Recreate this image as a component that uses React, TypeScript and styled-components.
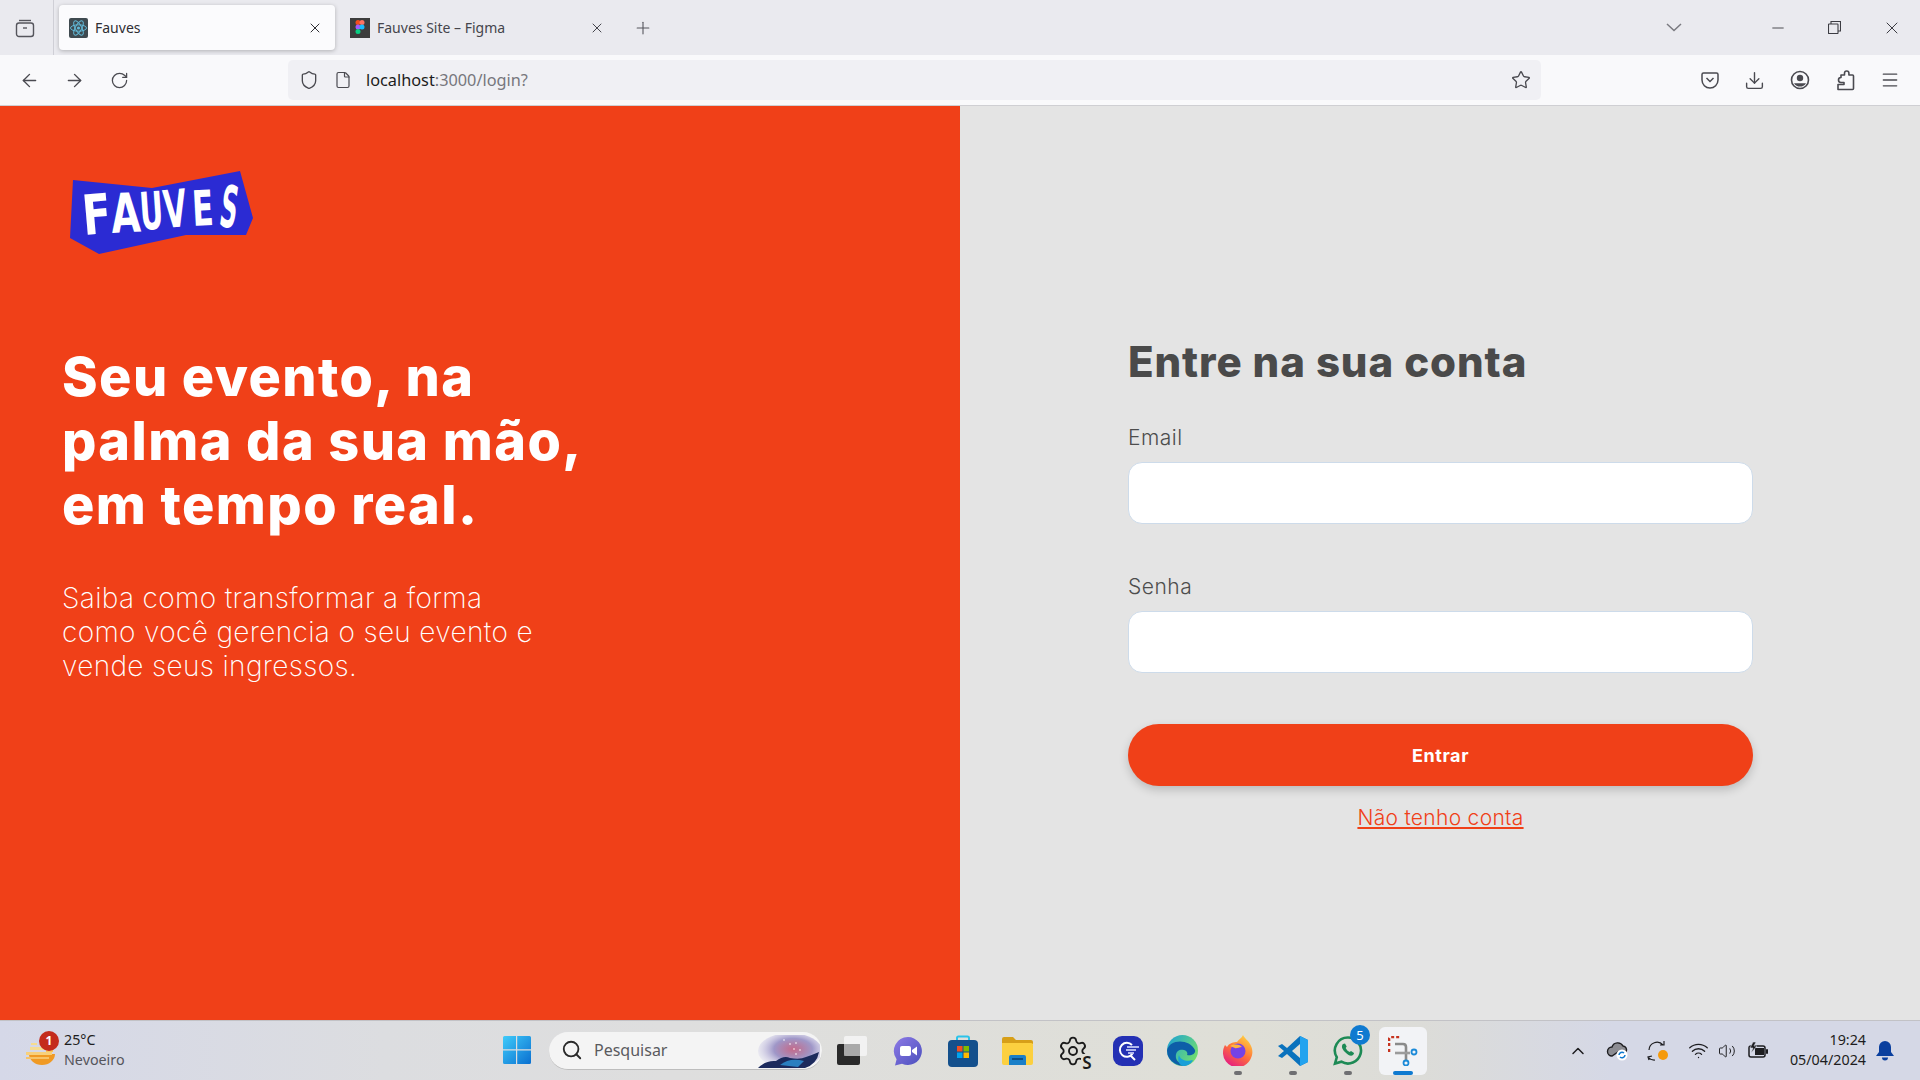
import { ArrowLeft, ArrowRight, ChevronUp, Download, File, Menu, Minus, Plus, RotateCw, Search, Settings, Shield, Star, Volume2, Wifi, X } from 'lucide-react';
import styled, { createGlobalStyle } from 'styled-components';

const GlobalStyle = createGlobalStyle`
	html, body {
		margin: 0;
		padding: 0;
		overflow: hidden;
	}
	* {
		box-sizing: border-box;
	}
`;

const ORANGE = '#f04018';
const CHROME_FONT = `'Noto Sans', 'Open Sans', sans-serif`;
const PAGE_FONT = `Inter, 'Open Sans', sans-serif`;

const Screen = styled.div`
	width: 1920px;
	height: 1080px;
	display: flex;
	flex-direction: column;
	overflow: hidden;
`;

/* ---------- browser chrome ---------- */

const TabBar = styled.div`
	height: 55px;
	flex: none;
	display: flex;
	align-items: stretch;
	background: #eaeaef;
	font-family: ${CHROME_FONT};
	color: #3a3a40;
`;

const TabsButton = styled.div`
	width: 54px;
	display: flex;
	align-items: center;
	justify-content: center;
	border-right: 1px solid #cfcfd6;
	padding-right: 4px;
`;

const Tab = styled.div<{ $active?: boolean; $width: number }>`
	width: ${(p) => p.$width}px;
	margin: 5px 0 5px 5px;
	padding: 0 12px 0 10px;
	display: flex;
	align-items: center;
	gap: 7px;
	font-size: 14px;
	border-radius: 4px;
	color: ${(p) => (p.$active ? '#2e2e33' : '#45454c')};
	background: ${(p) => (p.$active ? '#fbfbfd' : 'transparent')};
	box-shadow: ${(p) => (p.$active ? '0 1px 4px rgba(0, 0, 0, 0.25)' : 'none')};
`;

const TabTitle = styled.span`
	flex: 1;
	white-space: nowrap;
`;

const NewTab = styled.div`
	margin-left: 16px;
	display: flex;
	align-items: center;
	color: #55555c;
`;

const TabListButton = styled.div`
	margin-left: auto;
	width: 60px;
	display: flex;
	align-items: center;
	justify-content: center;
	color: #7a7a80;
	padding-bottom: 1px;
`;

const WindowButton = styled.div`
	width: 57px;
	display: flex;
	align-items: center;
	justify-content: center;
	color: #3c3c42;
`;

const WindowButtons = styled.div`
	margin-left: 45px;
	display: flex;
`;

const NavBar = styled.div`
	height: 51px;
	flex: none;
	display: flex;
	align-items: center;
	background: #f9f9fb;
	border-bottom: 1px solid #cfcfd3;
	padding-left: 7px;
	color: #4a4a50;
`;

const NavButton = styled.div`
	width: 45px;
	display: flex;
	align-items: center;
	justify-content: center;
`;

const UrlBar = styled.div`
	width: 1253px;
	height: 40px;
	margin-left: 146px;
	display: flex;
	align-items: center;
	border-radius: 5px;
	background: #f0f0f4;
	padding: 0 10px 0 11px;
	font-family: ${CHROME_FONT};
	font-size: 16.3px;
`;

const UrlIcon = styled.span`
	width: 35px;
	display: flex;
	align-items: center;
	color: #4a4a50;
`;

const UrlHost = styled.span`
	color: #1c1c20;
	margin-left: -3px;
`;

const UrlPath = styled.span`
	color: #77777d;
	flex: 1;
`;

const NavTools = styled.div`
	margin-left: 146px;
	display: flex;
`;

/* ---------- page ---------- */

const Main = styled.main`
	flex: 1;
	min-height: 0;
	display: flex;
`;

const HeroPanel = styled.section`
	width: 960px;
	background: ${ORANGE};
	padding: 59px 0 0 62px;
	color: #fff;
	font-family: ${PAGE_FONT};
`;

const LogoArt = styled.svg`
	display: block;
	width: 200px;
	height: 100px;
`;

const HeroTitle = styled.h1`
	margin: 80px 0 0;
	font-size: 54px;
	line-height: 64px;
	font-weight: 800;
	letter-spacing: 1.4px;
`;

const HeroText = styled.p`
	margin: 44px 0 0;
	width: 520px;
	font-size: 28px;
	line-height: 34px;
	font-weight: 200;
	letter-spacing: 0.35px;
`;

const FormPanel = styled.section`
	flex: 1;
	background: #e4e4e4;
	padding: 231px 0 0 168px;
	font-family: ${PAGE_FONT};
`;

const LoginForm = styled.form`
	width: 625px;
	display: flex;
	flex-direction: column;
`;

const FormTitle = styled.h2`
	margin: 0 0 38px;
	font-size: 42px;
	line-height: 50px;
	font-weight: 800;
	letter-spacing: 0.9px;
	color: #4a4a4a;
`;

const Field = styled.label`
	display: block;
	margin-bottom: 50px;
	font-size: 21px;
	line-height: 26px;
	font-weight: 300;
	letter-spacing: 0.5px;
	color: #4d4d4d;
`;

const FieldInput = styled.input`
	display: block;
	width: 100%;
	height: 62px;
	margin-top: 11px;
	border-radius: 14px;
	border: 1px solid #cddbea;
	background: #fff;
	outline: none;
`;

const SubmitButton = styled.button`
	height: 62px;
	margin-top: 1px;
	border: none;
	border-radius: 31px;
	background: ${ORANGE};
	color: #fff;
	font-family: ${PAGE_FONT};
	font-size: 18px;
	font-weight: 700;
	letter-spacing: 0.6px;
	box-shadow: 0 4px 10px rgba(0, 0, 0, 0.18);
`;

const SignupLink = styled.a`
	margin-top: 18px;
	align-self: center;
	font-size: 21px;
	line-height: 28px;
	font-weight: 300;
	letter-spacing: 0.3px;
	color: ${ORANGE};
	text-decoration: underline;
`;

/* ---------- taskbar ---------- */

const Taskbar = styled.footer`
	height: 60px;
	flex: none;
	display: grid;
	grid-template-columns: 490px auto 1fr;
	align-items: center;
	border-top: 1px solid #c2c2c6;
	background: linear-gradient(90deg, #d5d8e8 0%, #dcdde0 20%, #dedede 35%, #dfdfd7 65%, #dcdcd8 74%, #d5d8e6 84%, #d5d8e6 100%);
	font-family: ${CHROME_FONT};
	color: #1d1d20;
`;

const Weather = styled.div`
	position: relative;
	display: flex;
	align-items: center;
	padding-left: 25px;
	gap: 9px;
`;

const WeatherBadge = styled.span`
	position: absolute;
	left: 39px;
	top: -1px;
	width: 20px;
	height: 20px;
	border-radius: 50%;
	background: #c42b1c;
	color: #fff;
	font-size: 12px;
	font-weight: 700;
	display: flex;
	align-items: center;
	justify-content: center;
`;

const WeatherText = styled.div`
	display: flex;
	flex-direction: column;
	font-size: 14.3px;
	line-height: 20px;
	margin-top: -2px;
`;

const WeatherSub = styled.span`
	color: #55555c;
`;

const CenterGroup = styled.div`
	display: flex;
	align-items: center;
`;

const TaskSlot = styled.div<{ $running?: boolean; $selected?: boolean }>`
	position: relative;
	width: ${(p) => (p.$selected ? 48 : 55)}px;
	height: 48px;
	margin: 0 ${(p) => (p.$selected ? 3.5 : 0)}px;
	display: flex;
	align-items: center;
	justify-content: center;
	border-radius: 6px;
	background: ${(p) => (p.$selected ? '#f2f3f6' : 'transparent')};
	&::after {
		content: '';
		display: ${(p) => (p.$running || p.$selected ? 'block' : 'none')};
		position: absolute;
		bottom: 0;
		left: 50%;
		transform: translateX(-50%);
		width: ${(p) => (p.$selected ? 20 : 8)}px;
		height: 4px;
		border-radius: 2px;
		background: ${(p) => (p.$selected ? '#0f7ad0' : '#6f6f72')};
	}
`;

const CountBadge = styled.span`
	position: absolute;
	right: 5px;
	top: -2px;
	width: 20px;
	height: 20px;
	border-radius: 50%;
	background: #0f7ad0;
	color: #fff;
	font-size: 13px;
	display: flex;
	align-items: center;
	justify-content: center;
`;

const SearchBox = styled.div`
	position: relative;
	width: 273px;
	height: 38px;
	margin: 0 3px 0 4px;
	display: flex;
	align-items: center;
	gap: 11px;
	padding-left: 12px;
	border-radius: 19px;
	background: #f4f4f4;
	border-bottom: 1px solid #bdbdbd;
	font-size: 16px;
	color: #5a5a5e;
	overflow: hidden;
`;

const SearchArt = styled.svg`
	position: absolute;
	right: 2px;
	top: 3px;
`;

const Tray = styled.div`
	display: flex;
	align-items: center;
	justify-content: flex-end;
	padding-right: 20px;
`;

const TraySlot = styled.div<{ $w: number }>`
	width: ${(p) => p.$w}px;
	display: flex;
	align-items: center;
	justify-content: center;
`;

const Clock = styled.div`
	width: 86px;
	margin: -2px 4px 0 0;
	text-align: right;
	font-size: 14.3px;
	line-height: 20px;
`;

const SettingsWrap = styled.div`
	position: relative;
	display: flex;
`;

const SettingsLetter = styled.span`
	position: absolute;
	right: -3px;
	bottom: -4px;
	font-size: 17px;
	line-height: 17px;
	font-weight: 600;
	color: #1b1b1b;
	background: #dfdfd8;
	padding-left: 1px;
`;

/* ---------- drawings ---------- */

const ReactFavicon = () => (
	<svg width='19' height='20' viewBox='0 0 19 20'>
		<rect width='19' height='20' rx='2' fill='#3f4a50' />
		<g fill='none' stroke='#61b8d6' strokeWidth='1'>
			<ellipse cx='9.5' cy='10' rx='8' ry='3.2' />
			<ellipse cx='9.5' cy='10' rx='8' ry='3.2' transform='rotate(60 9.5 10)' />
			<ellipse cx='9.5' cy='10' rx='8' ry='3.2' transform='rotate(120 9.5 10)' />
		</g>
		<circle cx='9.5' cy='10' r='1.6' fill='#61b8d6' />
	</svg>
);

const FigmaFavicon = () => (
	<svg width='20' height='20' viewBox='0 0 20 20'>
		<rect width='20' height='20' fill='#3d3d3d' />
		<circle cx='8' cy='4.5' r='2.5' fill='#f24e1e' />
		<circle cx='12' cy='4.5' r='2.5' fill='#ff7262' />
		<circle cx='8' cy='9' r='2.5' fill='#a259ff' />
		<circle cx='12' cy='9' r='2.5' fill='#1abcfe' />
		<circle cx='8' cy='13.5' r='2.5' fill='#0acf83' />
	</svg>
);

const TabsIcon = () => (
	<svg width='20' height='20' viewBox='0 0 20 20' fill='none' stroke='#55555c' strokeWidth='1.4'>
		<path d='M4 2.5h12' />
		<rect x='1.5' y='5' width='17' height='13.5' rx='2.5' />
		<path d='M8 10h4' />
	</svg>
);

const TabListChevron = () => (
	<svg width='16' height='9' viewBox='0 0 16 9' fill='none' stroke='#7a7a80' strokeWidth='1.5'>
		<path d='M1 1l7 6.500 7-6.500' />
	</svg>
);

const RestoreIcon = () => (
	<svg width='13' height='13' viewBox='0 0 13 13' fill='none' stroke='#3c3c42' strokeWidth='1.1'>
		<rect x='0.5' y='3' width='9.500' height='9.500' rx='0.5' />
		<path d='M3 3V0.5h9.500V10H10' />
	</svg>
);

const PocketIcon = () => (
	<svg width='20' height='20' viewBox='0 0 20 20' fill='none' stroke='#4a4a50' strokeWidth='1.5'>
		<path d='M3.5 3h13A1.5 1.5 0 0 1 18 4.5V10a8 8 0 0 1-16 0V4.5A1.5 1.5 0 0 1 3.5 3z' />
		<path d='M6.5 8l3.5 3.5L13.5 8' />
	</svg>
);

const ProfileIcon = () => (
	<svg width='20' height='20' viewBox='0 0 20 20'>
		<circle cx='10' cy='10' r='8.500' fill='none' stroke='#4a4a50' strokeWidth='1.6' />
		<circle cx='10' cy='8' r='3.200' fill='#4a4a50' />
		<path d='M4 13.200h12a7 7 0 0 1-12 0z' fill='#4a4a50' />
	</svg>
);

const ExtensionIcon = () => (
	<svg width='20' height='21' viewBox='0 0 20 21' fill='none' stroke='#4a4a50' strokeWidth='1.6' strokeLinejoin='round'>
		<path d='M6 5h3.500V3.200a2.200 2.200 0 1 1 4.400 0V5h3.600a1 1 0 0 1 1 1v12.500a1 1 0 0 1-1 1H3v-5h6v-2H6a2.500 2.500 0 1 1 0-5z' />
	</svg>
);

const FauvesLogo = () => (
	<LogoArt viewBox='62 165 200 100'>
		<polygon points='73,180 152,188 240,171 253,218 246,235 186,235 99,254 70,238' fill='#2b2bd3' />
		<g fill='#fff' fontFamily="'DejaVu Sans', sans-serif" fontWeight='700' fontSize='40'>
			<text transform='translate(84 235) rotate(-5) scale(1.05 1.38)'>F</text>
			<text transform='translate(112 233) rotate(-3) scale(0.95 1.36)'>A</text>
			<text transform='translate(141 230) rotate(-4) scale(0.72 1.3)'>U</text>
			<text transform='translate(165 228) rotate(-5) scale(0.75 1.3)'>V</text>
			<text transform='translate(193 226) rotate(-3) scale(0.78 1.22)'>E</text>
			<text transform='translate(218 226) rotate(8) scale(0.6 1.45)'>S</text>
		</g>
	</LogoArt>
);

const WeatherIcon = () => (
	<svg width='30' height='28' viewBox='0 0 30 28'>
		<path d='M4 17h26a13 11 0 0 1-26 0z' fill='#f09a24' />
		<rect x='6' y='6' width='6' height='2' fill='#f6dc8e' />
		<rect x='5' y='10' width='19' height='3' fill='#f5dc94' />
		<rect x='1' y='15' width='26' height='3' fill='#f7d07c' />
		<rect x='21' y='12' width='7' height='3' fill='#f8c65a' />
		<rect x='1' y='20' width='23' height='2' fill='#f6c46a' />
	</svg>
);

const WindowsLogo = () => (
	<svg width='30' height='30' viewBox='0 0 30 30'>
		<defs>
			<linearGradient id='win' x1='0' y1='0' x2='1' y2='1'>
				<stop offset='0' stopColor='#3fcbfa' />
				<stop offset='1' stopColor='#0a6fd0' />
			</linearGradient>
		</defs>
		<path d='M0 1.500Q0 0 1.500 0H13V13.300H0zM14.200 0H26.500Q28 0 28 1.500V13.300H14.200zM0 14.500H13V28H1.500Q0 28 0 26.500zM14.200 14.500H28V26.500Q28 28 26.500 28H14.200z' fill='url(#win)' />
	</svg>
);

const SearchLandscape = () => (
	<SearchArt width='66' height='34' viewBox='0 0 66 34'>
		<defs>
			<radialGradient id='sky' cx='0.55' cy='0.45' r='0.6'>
				<stop offset='0' stopColor='#c46a8a' />
				<stop offset='0.5' stopColor='#9f97c8' />
				<stop offset='1' stopColor='#d9d8ee' stopOpacity='0.2' />
			</radialGradient>
		</defs>
		<ellipse cx='36' cy='16' rx='32' ry='18' fill='url(#sky)' />
		<path d='M4 33q8-8 18-7 8-6 14-3 10 2 16-1 6-2 13-5-2 12-14 16z' fill='#1c2a5c' />
		<path d='M26 30q10-8 24-4l-6 6z' fill='#2a7fc0' />
		<g fill='#fff'>
			<circle cx='30' cy='5' r='0.8' />
			<circle cx='36' cy='9' r='0.8' />
			<circle cx='42' cy='8' r='0.8' />
			<circle cx='40' cy='14' r='0.8' />
			<circle cx='46' cy='15' r='0.8' />
			<circle cx='42' cy='19' r='0.8' />
		</g>
	</SearchArt>
);

const TaskViewIcon = () => (
	<svg width='31' height='29' viewBox='0 0 31 29'>
		<rect x='0' y='8' width='23' height='21' rx='2' fill='#2a2a2a' />
		<rect x='7' y='0' width='23' height='20' rx='2' fill='#f6f6f6' fillOpacity='0.85' />
		<rect x='7' y='8' width='16' height='12' fill='#9a9a9a' fillOpacity='0.75' />
	</svg>
);

const MeetIcon = () => (
	<svg width='30' height='30' viewBox='0 0 30 30'>
		<defs>
			<linearGradient id='meet' x1='0' y1='0' x2='1' y2='1'>
				<stop offset='0' stopColor='#8d7ae6' />
				<stop offset='1' stopColor='#4b4fbd' />
			</linearGradient>
		</defs>
		<path d='M15 1a14 14 0 1 1-6 26.700L2 29.500l1.600-6.300A14 14 0 0 1 15 1z' fill='url(#meet)' />
		<rect x='7' y='10' width='11' height='10' rx='2' fill='#fff' />
		<path d='M19 14l5-3.500v9L19 16z' fill='#fff' />
	</svg>
);

const StoreIcon = () => (
	<svg width='30' height='32' viewBox='0 0 30 32'>
		<path d='M9 5V3q0-1.500 1.500-1.500h9Q21 1.500 21 3v2' fill='none' stroke='#2cc3ea' strokeWidth='2' />
		<rect y='5' width='30' height='27' rx='4' fill='#14508c' />
		<rect x='9' y='11' width='5.500' height='5.500' fill='#f25022' />
		<rect x='15.500' y='11' width='5.500' height='5.500' fill='#7fba00' />
		<rect x='9' y='17.500' width='5.500' height='5.500' fill='#00a4ef' />
		<rect x='15.500' y='17.500' width='5.500' height='5.500' fill='#ffb900' />
	</svg>
);

const FolderIcon = () => (
	<svg width='31' height='28' viewBox='0 0 31 28'>
		<path d='M0 2q0-2 2-2h9l3 3h15q2 0 2 2v2H0z' fill='#d79f18' />
		<path d='M0 6h29q2 0 2 2v18q0 2-2 2H2q-2 0-2-2z' fill='#fcd03f' />
		<path d='M7 28v-8q0-2 2-2h13q2 0 2 2v8z' fill='#1a7fc8' />
		<rect x='10' y='21' width='11' height='2' fill='#0c4f86' />
	</svg>
);

const LensApp = () => (
	<svg width='30' height='30' viewBox='0 0 30 30'>
		<rect width='30' height='30' rx='9' fill='#2430b4' />
		<path d='M19 9a7 7 0 1 0 .5 9' fill='none' stroke='#fff' strokeWidth='2' />
		<path d='M17 19l5 5' stroke='#fff' strokeWidth='2' />
		<path d='M14 11h12M13 14h10M15 17h6' stroke='#dfe4ff' strokeWidth='1.300' />
	</svg>
);

const EdgeIcon = () => (
	<svg width='31' height='31' viewBox='0 0 31 31'>
		<defs>
			<linearGradient id='edgeTop' x1='0' y1='0' x2='1' y2='0.6'>
				<stop offset='0' stopColor='#1aa0d8' />
				<stop offset='1' stopColor='#6fdc70' />
			</linearGradient>
		</defs>
		<circle cx='15.500' cy='15.500' r='15.500' fill='url(#edgeTop)' />
		<path d='M0 15.500C2 4 22 3 28 15c1 4-4 6-8 5 3-6-13-9-11 3 1 5 8 8 15 5A15.500 15.500 0 0 1 0 15.500z' fill='#0d5ea8' />
		<path d='M12 20c1 5 8 7 14 5-2 4-6 6-10 6-4-1-6-6-4-11z' fill='#1aa0d8' />
	</svg>
);

const FirefoxIcon = () => (
	<svg width='30' height='31' viewBox='0 0 30 31'>
		<defs>
			<linearGradient id='fox' x1='0.8' y1='0' x2='0.2' y2='1'>
				<stop offset='0' stopColor='#ffd640' />
				<stop offset='0.5' stopColor='#ff7139' />
				<stop offset='1' stopColor='#e31587' />
			</linearGradient>
		</defs>
		<path d='M20 0c1 3 5 5 7 9 3 5 3 10 1 14a14.500 14.500 0 0 1-28-6c0-3 1-5 2-7l2 2c2-4 7-5 10-5 2-3 5-4 6-7z' fill='url(#fox)' />
		<circle cx='15' cy='16' r='7.500' fill='#7542e5' />
		<path d='M7 11c4-2 9-2 12 1-3 0-6 2-7 1z' fill='#ffb43e' />
	</svg>
);

const VsCodeIcon = () => (
	<svg width='30' height='30' viewBox='0 0 30 30'>
		<path d='M22 0l8 4v22l-8 4L9 18l-5 4-4-2 6-5-6-5 4-2 5 4z' fill='#0a72bd' />
		<path d='M22 0l8 4v22l-8 4z' fill='#23a3ef' />
		<path d='M22 8l-8 7 8 7z' fill='#dfdfd7' />
	</svg>
);

const WhatsAppIcon = () => (
	<svg width='31' height='31' viewBox='0 0 31 31'>
		<path d='M16 2.500a13 13 0 1 1-6.600 24.200L3 28.500l1.800-6.200A13 13 0 0 1 16 2.500z' fill='none' stroke='#1d8a55' strokeWidth='2.600' />
		<path d='M11 9c-2 2-1 5 2 8s6 5 8 3c1-1 1-2 1-2l-3-2-1.300 1c-2-1-3-2-4-4l1-1.500-1.700-3z' fill='#1d8a55' />
	</svg>
);

const SnipIcon = () => (
	<svg width='30' height='30' viewBox='0 0 30 30' fill='none'>
		<path d='M1 10V3q0-2 2-2h9' stroke='#c6321e' strokeWidth='2.600' strokeDasharray='3 2' />
		<path d='M1 13v3' stroke='#c6321e' strokeWidth='2.600' />
		<path d='M7 8h8q3 0 3 3v13' stroke='#8a8a8a' strokeWidth='2.600' />
		<path d='M7 17h15' stroke='#9b9b9b' strokeWidth='2.600' />
		<circle cx='26' cy='16' r='2.500' stroke='#1c8ad8' strokeWidth='1.800' />
		<circle cx='18' cy='27' r='2.500' stroke='#1c8ad8' strokeWidth='1.800' />
	</svg>
);

const CloudSync = () => (
	<svg width='24' height='20' viewBox='0 0 24 20'>
		<path d='M6 15a4.500 4.500 0 0 1 0-9 6 6 0 0 1 11-1 4 4 0 0 1 3 6H12z' fill='#8c8c92' stroke='#1d1d20' strokeWidth='1.400' />
		<circle cx='16' cy='14' r='5.500' fill='#fff' />
		<path d='M13 14a3 3 0 0 1 5-2M19 14a3 3 0 0 1-5 2' stroke='#0f7ad0' strokeWidth='1.500' fill='none' />
	</svg>
);

const SyncDot = () => (
	<svg width='22' height='22' viewBox='0 0 22 22' fill='none' stroke='#1d1d20' strokeWidth='1.200'>
		<path d='M2 10a8 8 0 0 1 14-5M13 5h4V1' />
		<path d='M2 20l-1-3 4-1M1 17a8 8 0 0 0 7 3' />
		<circle cx='16' cy='15' r='5' fill='#f59a0c' stroke='none' />
	</svg>
);

const BatteryIcon = () => (
	<svg width='21' height='18' viewBox='0 0 21 18'>
		<rect x='1' y='4' width='16' height='11' rx='2' fill='none' stroke='#1d1d20' strokeWidth='1.500' />
		<rect x='7' y='6' width='9' height='7' fill='#1d1d20' />
		<rect x='18' y='7' width='2' height='5' rx='1' fill='#1d1d20' />
		<path d='M5 0L2 6h3l-2 5 6-7H6l2-4z' fill='#1d1d20' stroke='#d5d8e6' strokeWidth='0.600' />
	</svg>
);

const BellIcon = () => (
	<svg width='18' height='20' viewBox='0 0 18 20'>
		<path d='M9 0a6 6 0 0 1 6 6v5l3 4H0l3-4V6a6 6 0 0 1 6-6z' fill='#0a3f9e' />
		<path d='M6 16.500h6a3 3 0 0 1-6 0z' fill='#0a3f9e' />
	</svg>
);

export default function App() {
	return (
		<Screen>
			<GlobalStyle />
			<TabBar>
				<TabsButton>
					<TabsIcon />
				</TabsButton>
				<Tab $active $width={276}>
					<ReactFavicon />
					<TabTitle>Fauves</TabTitle>
					<X size={16} strokeWidth={1.5} />
				</Tab>
				<Tab $width={277}>
					<FigmaFavicon />
					<TabTitle>Fauves Site – Figma</TabTitle>
					<X size={16} strokeWidth={1.5} />
				</Tab>
				<NewTab>
					<Plus size={20} strokeWidth={1.3} />
				</NewTab>
				<TabListButton>
					<TabListChevron />
				</TabListButton>
				<WindowButtons>
					<WindowButton>
						<Minus size={18} strokeWidth={1.2} />
					</WindowButton>
					<WindowButton>
						<RestoreIcon />
					</WindowButton>
					<WindowButton>
						<X size={20} strokeWidth={1.2} />
					</WindowButton>
				</WindowButtons>
			</TabBar>
			<NavBar>
				<NavButton>
					<ArrowLeft size={21} strokeWidth={1.6} />
				</NavButton>
				<NavButton>
					<ArrowRight size={21} strokeWidth={1.6} />
				</NavButton>
				<NavButton>
					<RotateCw size={19} strokeWidth={1.6} />
				</NavButton>
				<UrlBar>
					<UrlIcon>
						<Shield size={20} strokeWidth={1.6} />
					</UrlIcon>
					<UrlIcon>
						<File size={18} strokeWidth={1.6} />
					</UrlIcon>
					<UrlHost>localhost</UrlHost>
					<UrlPath>:3000/login?</UrlPath>
					<Star size={20} strokeWidth={1.6} />
				</UrlBar>
				<NavTools>
					<NavButton>
						<PocketIcon />
					</NavButton>
					<NavButton>
						<Download size={21} strokeWidth={1.6} />
					</NavButton>
					<NavButton>
						<ProfileIcon />
					</NavButton>
					<NavButton>
						<ExtensionIcon />
					</NavButton>
					<NavButton>
						<Menu size={20} strokeWidth={1.6} />
					</NavButton>
				</NavTools>
			</NavBar>
			<Main>
				<HeroPanel>
					<FauvesLogo />
					<HeroTitle>
						Seu evento, na
						<br />
						palma da sua mão,
						<br />
						em tempo real.
					</HeroTitle>
					<HeroText>
						Saiba como transformar a forma
						<br />
						como você gerencia o seu evento e
						<br />
						vende seus ingressos.
					</HeroText>
				</HeroPanel>
				<FormPanel>
					<LoginForm>
						<FormTitle>Entre na sua conta</FormTitle>
						<Field>
							Email
							<FieldInput type='email' />
						</Field>
						<Field>
							Senha
							<FieldInput type='password' />
						</Field>
						<SubmitButton type='button'>Entrar</SubmitButton>
						<SignupLink href='#'>Não tenho conta</SignupLink>
					</LoginForm>
				</FormPanel>
			</Main>
			<Taskbar>
				<Weather>
					<WeatherIcon />
					<WeatherBadge>1</WeatherBadge>
					<WeatherText>
						<span>25°C</span>
						<WeatherSub>Nevoeiro</WeatherSub>
					</WeatherText>
				</Weather>
				<CenterGroup>
					<TaskSlot>
						<WindowsLogo />
					</TaskSlot>
					<SearchBox>
						<Search size={22} strokeWidth={2} color='#2a2a2a' />
						Pesquisar
						<SearchLandscape />
					</SearchBox>
					<TaskSlot>
						<TaskViewIcon />
					</TaskSlot>
					<TaskSlot>
						<MeetIcon />
					</TaskSlot>
					<TaskSlot>
						<StoreIcon />
					</TaskSlot>
					<TaskSlot>
						<FolderIcon />
					</TaskSlot>
					<TaskSlot>
						<SettingsWrap>
							<Settings size={32} strokeWidth={1.4} color='#1b1b1b' />
							<SettingsLetter>S</SettingsLetter>
						</SettingsWrap>
					</TaskSlot>
					<TaskSlot>
						<LensApp />
					</TaskSlot>
					<TaskSlot>
						<EdgeIcon />
					</TaskSlot>
					<TaskSlot $running>
						<FirefoxIcon />
					</TaskSlot>
					<TaskSlot $running>
						<VsCodeIcon />
					</TaskSlot>
					<TaskSlot $running>
						<WhatsAppIcon />
						<CountBadge>5</CountBadge>
					</TaskSlot>
					<TaskSlot $selected>
						<SnipIcon />
					</TaskSlot>
				</CenterGroup>
				<Tray>
					<TraySlot $w={40}>
						<ChevronUp size={20} strokeWidth={1.8} />
					</TraySlot>
					<TraySlot $w={40}>
						<CloudSync />
					</TraySlot>
					<TraySlot $w={40}>
						<SyncDot />
					</TraySlot>
					<TraySlot $w={40}>
						<Wifi size={21} strokeWidth={1.5} />
					</TraySlot>
					<TraySlot $w={18}>
						<Volume2 size={20} strokeWidth={1.3} />
					</TraySlot>
					<TraySlot $w={44}>
						<BatteryIcon />
					</TraySlot>
					<Clock>
						19:24
						<br />
						05/04/2024
					</Clock>
					<TraySlot $w={30}>
						<BellIcon />
					</TraySlot>
				</Tray>
			</Taskbar>
		</Screen>
	);
}
